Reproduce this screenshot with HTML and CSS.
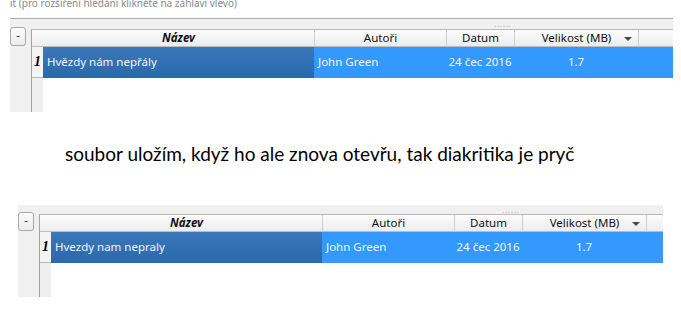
FILE: index.html
```html
<!DOCTYPE html>
<html lang="cs">
<head>
  <meta charset="UTF-8">
  <title>Diakritika v tabulce</title>
  <link rel="stylesheet" href="styles.css">
</head>
<body>
  <div class="caption">it (pro rozšíření hledání klikněte na záhlaví vlevo)</div>

  <div class="pane pane-first">
    <span class="grip">......</span>
    <button class="toggle">-</button>
    <div class="table">
      <div class="head">
        <div class="corner"></div>
        <div class="th th-name">Název</div>
        <div class="th">Autoři</div>
        <div class="th">Datum</div>
        <div class="th th-sort">Velikost (MB)<span class="arrow"></span></div>
        <div class="th th-fill"></div>
      </div>
      <div class="row">
        <div class="num">1</div>
        <div class="td td-name">Hvězdy nám nepřály</div>
        <div class="td">John Green</div>
        <div class="td td-center">24 čec 2016</div>
        <div class="td td-center">1.7</div>
        <div class="td"></div>
      </div>
      <div class="rest"><div class="rest-num"></div></div>
    </div>
  </div>

  <p class="note">soubor uložím, když ho ale znova otevřu, tak diakritika je pryč</p>

  <div class="pane pane-second">
    <span class="grip">......</span>
    <button class="toggle">-</button>
    <div class="table">
      <div class="head">
        <div class="corner"></div>
        <div class="th th-name">Název</div>
        <div class="th">Autoři</div>
        <div class="th">Datum</div>
        <div class="th th-sort">Velikost (MB)<span class="arrow"></span></div>
        <div class="th th-fill"></div>
      </div>
      <div class="row">
        <div class="num">1</div>
        <div class="td td-name">Hvezdy nam nepraly</div>
        <div class="td">John Green</div>
        <div class="td td-center">24 čec 2016</div>
        <div class="td td-center">1.7</div>
        <div class="td"></div>
      </div>
      <div class="rest"><div class="rest-num"></div></div>
    </div>
  </div>
</body>
</html>
```

FILE: styles.css
```css
/* Two snapshots of the same book table */
body {
  margin: 0;
  background: #fff;
  font-family: 'Noto Sans', sans-serif;
  font-size: 11.5px;
  color: #000;
}

.caption {
  height: 21px;
  margin-top: -3px;
  overflow: hidden;
  padding-left: 10px;
  font-size: 10px;
  line-height: 12px;
  color: #8a8a8a;
  white-space: nowrap;
}

.pane {
  position: relative;
  display: flex;
  align-items: flex-start;
  gap: 5px;
  background: #f0f0f0;
  box-sizing: border-box;
}

.pane-first {
  margin-left: 10px;
  width: 663px;
  height: 94px;
  border-top: 1px solid #a9a9a9;
  padding-top: 10px;
}

.pane-second {
  margin-left: 18px;
  width: 645px;
  height: 92px;
  padding-top: 9px;
}

.grip {
  position: absolute;
  left: 484px;
  top: 0;
  font-size: 9px;
  line-height: 9px;
  color: #b0b0b0;
  letter-spacing: 0.5px;
}

.toggle {
  width: 16px;
  height: 19px;
  margin-top: -2px;
  padding: 0 0 3px;
  border: 1px solid #a8a8a8;
  border-radius: 3px;
  background: linear-gradient(#fbfbfb, #ececec);
  font-family: inherit;
  font-size: 11px;
  line-height: 14px;
  color: #222;
}

.table {
  flex: 1;
  align-self: stretch;
  display: flex;
  flex-direction: column;
  border-left: 1px solid #a3a3a3;
  border-top: 1px solid #b8b8b8;
}

.head,
.row {
  display: grid;
  grid-template-columns: 11px 271px 132px 68px 124px 1fr;
}

.head {
  height: 16px;
  background: linear-gradient(#fdfdfd, #ececec);
  border-bottom: 1px solid #bdbdbd;
  line-height: 16px;
}

.th {
  text-align: center;
  border-left: 1px solid #cfcfcf;
  color: #111;
  white-space: nowrap;
}

.corner + .th {
  border-left: none;
}

.th-name {
  font-weight: bold;
  font-style: italic;
}

.th-sort {
  position: relative;
}

.arrow {
  position: absolute;
  right: 6px;
  top: 7px;
  border-left: 4px solid transparent;
  border-right: 4px solid transparent;
  border-top: 4px solid #4a4a4a;
}

.row {
  height: 31px;
  line-height: 30px;
  background: #3399ff;
  color: #f2f6fb;
  white-space: nowrap;
}

.num {
  background: #f4f4f4;
  border-bottom: 1px solid #b8b8b8;
  color: #000;
  font-weight: bold;
  font-style: italic;
  font-family: 'Liberation Serif', serif;
  font-size: 14px;
  text-align: center;
  box-sizing: border-box;
}

.td {
  padding-left: 4px;
}

.td-name {
  background: linear-gradient(#3a78b8, #2a68ad);
}

.td-center {
  padding-left: 0;
  text-align: center;
}

.rest {
  flex: 1;
  background: #fff;
}

.rest-num {
  width: 11px;
  height: 100%;
  background: #efefef;
}

.note {
  margin: 0;
  height: 93px;
  box-sizing: border-box;
  padding: 30px 0 0 65px;
  font-family: 'Lato', sans-serif;
  font-size: 19px;
  line-height: 24px;
}
```
